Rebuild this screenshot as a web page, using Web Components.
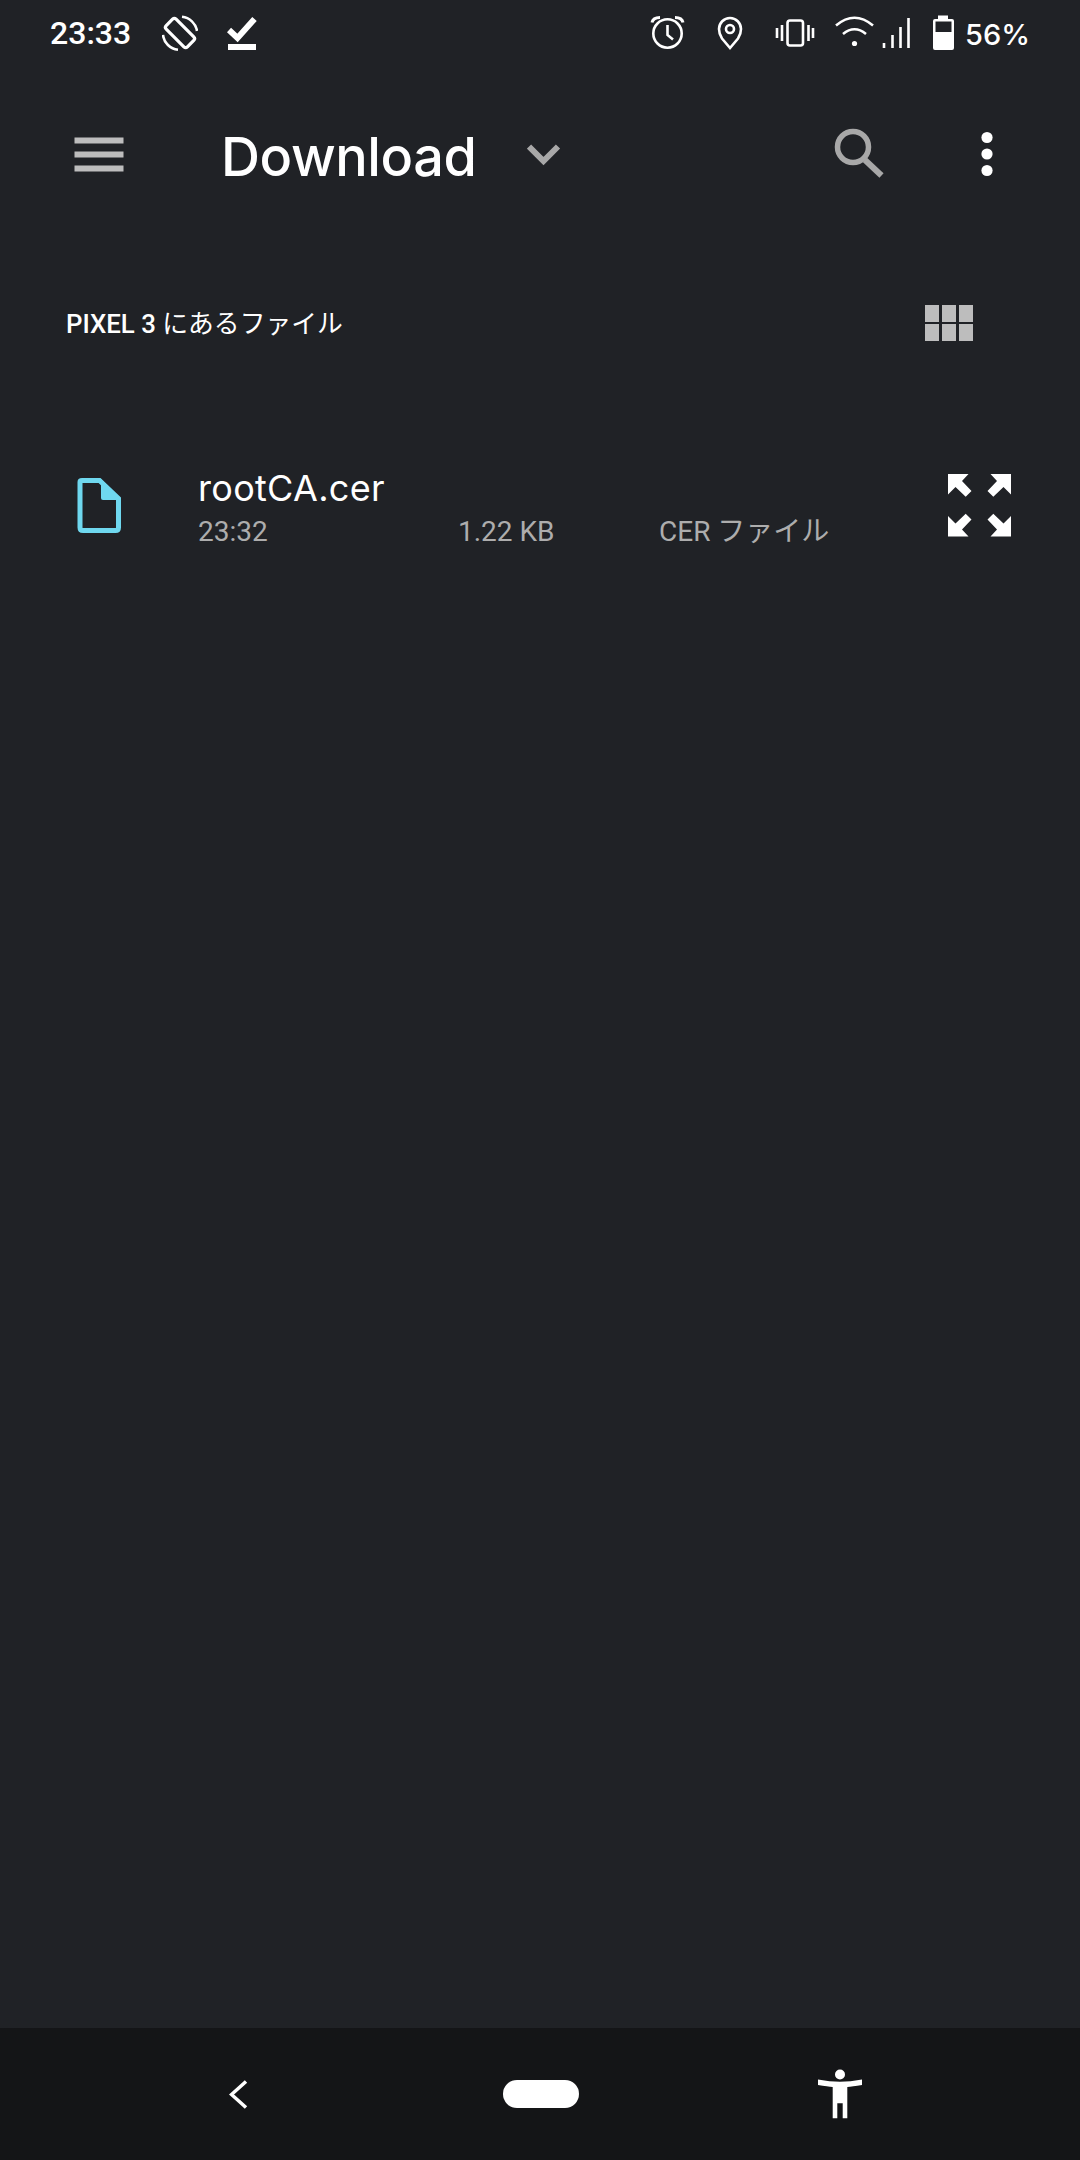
<!DOCTYPE html>
<html>
<head>
<meta charset="utf-8">
<title>Download</title>
<style>
    html, body { margin: 0; background: #202226; }
    body { width: 1080px; height: 2160px; font-family: Roboto, "Noto Sans CJK JP", sans-serif; color: #fff; }
</style>
</head>
<body>
<app-shell>
    <status-bar slot="top"></status-bar>
    <app-toolbar slot="top" title="Download"></app-toolbar>
    <section-head>PIXEL 3 <span style="font-weight:400">にあるファイル</span></section-head>
    <file-row name="rootCA.cer" time="23:32" size="1.22 KB" kind="CER ファイル"></file-row>
    <nav-bar slot="bottom"></nav-bar>
</app-shell>

<script>
class AppShell extends HTMLElement {
    connectedCallback() {
        this.attachShadow({mode: "open"}).innerHTML = `
            <style>
                :host { display: flex; flex-direction: column; height: 2160px; background: #202226; }
                main { flex: 1; }
            </style>
            <slot name="top"></slot>
            <main><slot></slot></main>
            <slot name="bottom"></slot>
        `;
    }
}

// svg viewBoxes are in page pixels, so x/y can be read straight off the screenshot
class StatusBar extends HTMLElement {
    connectedCallback() {
        this.attachShadow({mode: "open"}).innerHTML = `
            <style>
                :host { display: flex; height: 66px; padding-left: 50px; align-items: center; color: #fff; }
                svg { display: block; height: 66px; flex: none; fill: none; stroke: #fff; stroke-width: 2.6; }
                .time { font: 500 32px Roboto, sans-serif; width: 80px; }
                .pct { font: 500 29px Inter, sans-serif; margin-left: 10px; white-space: nowrap; position: relative; top: 1px; }
            </style>
            <span class="time">23:33</span>
            <svg style="margin-left:32px" width="36" viewBox="162 0 36 66">
                <rect x="173" y="18" width="14" height="30" rx="2.500" transform="rotate(-45 180 33)" stroke-width="3.200"/>
                <path d="M182 16.800A17 17 0 0 1 197 31M163 35A17 17 0 0 0 178 49.800"/>
            </svg>
            <svg style="margin-left:29px" width="30" viewBox="227 0 30 66">
                <path d="M229 30L237.500 38L254.500 19" stroke-width="6"/>
                <rect x="228" y="44" width="28" height="6" fill="#fff" stroke="none"/>
            </svg>
            <svg style="margin-left:393px" width="36" viewBox="650 0 36 66">
                <circle cx="667.500" cy="33.500" r="14.200"/>
                <path d="M667.500 25V35L673 39.500"/>
                <path d="M652 22.500Q653 17.500 660 17.500M683 22.500Q682 17.500 675 17.500" stroke-width="3"/>
            </svg>
            <svg style="margin-left:31px" width="26" viewBox="717 0 26 66">
                <path d="M730 48L722 38.500Q719 34 719 29A11 11 0 0 1 741 29Q741 34 738 38.500Z"/>
                <circle cx="730" cy="29" r="4"/>
            </svg>
            <svg style="margin-left:32px" width="40" viewBox="775 0 40 66">
                <rect x="787.500" y="20.500" width="15.500" height="25" rx="2.500"/>
                <path d="M782 25V41M777 28V38M808.500 25V41M813 28V38"/>
            </svg>
            <svg style="margin-left:19px" width="42" viewBox="834 0 42 66">
                <path d="M836 25.500Q854.500 10 873 25.500M843 34Q854.500 24.500 866 34"/>
                <circle cx="854.500" cy="43.500" r="2.600" fill="#fff" stroke="none"/>
            </svg>
            <svg style="margin-left:5px" width="30" viewBox="881 0 30 66">
                <path d="M884 43V48M892.500 35V48M900.500 27V48M908.500 18V48"/>
            </svg>
            <svg style="margin-left:21px" width="23" viewBox="932 0 23 66">
                <path d="M938 15.500H948V19H952Q954 19 954 21V48Q954 50 952 50H935Q933 50 933 48V21Q933 19 935 19H938Z" fill="#fff" stroke="none"/>
                <path d="M935.500 21.500H951.500V32H935.500Z" fill="#202226" stroke="none"/>
            </svg>
            <span class="pct">56%</span>
        `;
    }
}

class AppToolbar extends HTMLElement {
    connectedCallback() {
        this.attachShadow({mode: "open"}).innerHTML = `
            <style>
                :host { display: flex; height: 180px; align-items: center; }
                svg { display: block; height: 180px; flex: none; }
                h1 { margin: 0 0 0 97px; width: 256px; font: 500 54px Inter, sans-serif; color: #fff; white-space: nowrap; letter-spacing: -0.4px; }
            </style>
            <svg style="margin-left:74px" width="50" viewBox="74 66 50 180" fill="#bdbdbd">
                <rect x="74.500" y="137.500" width="49" height="6"/>
                <rect x="74.500" y="151.500" width="49" height="6"/>
                <rect x="74.500" y="165.500" width="49" height="6"/>
            </svg>
            <h1>${this.getAttribute("title")}</h1>
            <svg style="margin-left:50px" width="34" viewBox="527 66 34 180" fill="none" stroke="#a8a8a8" stroke-width="6">
                <path d="M529 146.500L543.500 161L558 146.500"/>
            </svg>
            <svg style="margin-left:273px" width="50" viewBox="834 66 50 180" fill="none" stroke="#a8a8a8">
                <circle cx="853" cy="147" r="15.500" stroke-width="5.500"/>
                <path d="M865 160L881.500 175.500" stroke-width="6"/>
            </svg>
            <svg style="margin-left:97px" width="12" viewBox="981 66 12 180" fill="#fff">
                <circle cx="987" cy="137.500" r="5.600"/>
                <circle cx="987" cy="154" r="5.600"/>
                <circle cx="987" cy="170.500" r="5.600"/>
            </svg>
        `;
    }
}

class SectionHead extends HTMLElement {
    connectedCallback() {
        this.attachShadow({mode: "open"}).innerHTML = `
            <style>
                :host { display: flex; height: 154px; align-items: center; padding-left: 66px; font: 500 25.800px Roboto, "Noto Sans CJK JP", sans-serif; color: #fff; }
                .label { flex: 1; white-space: nowrap; margin-top: -4px; }
                .grid { display: grid; grid-template-columns: repeat(3, 14.500px); grid-auto-rows: 17px; gap: 2px 2.500px; margin-right: 107px; }
                .grid i { background: #bdbdbd; }
            </style>
            <span class="label"><slot></slot></span>
            <div class="grid"><i></i><i></i><i></i><i></i><i></i><i></i></div>
        `;
    }
}

class FileRow extends HTMLElement {
    connectedCallback() {
        const a = n => this.getAttribute(n);
        this.attachShadow({mode: "open"}).innerHTML = `
            <style>
                :host { display: flex; align-items: flex-start; padding: 67px 68px 0 76px; }
                svg { display: block; flex: none; }
                .text { flex: 1; margin-left: 76px; }
                .name { font: 400 36px/44px Inter, sans-serif; color: #fff; letter-spacing: 0.3px; height: 44px; margin-top: -1px; }
                .meta { display: flex; font: 400 28px/36px Roboto, "Noto Sans CJK JP", sans-serif; color: #adadad; margin-top: 4px; white-space: nowrap; }
                .meta span:nth-child(1) { width: 260px; }
                .meta span:nth-child(2) { width: 201px; }
            </style>
            <svg width="46" height="84" viewBox="76 467 46 84">
                <path d="M82 480.500H99.500L118.500 498.500V527.500Q118.500 530.500 115.500 530.500H83Q80 530.500 80 527.500V482Q80 480.500 82 480.500Z" fill="none" stroke="#6fd8ef" stroke-width="5"/>
                <path d="M101 479L120 497.500V500H103Q101 500 101 498Z" fill="#6fd8ef"/>
            </svg>
            <div class="text">
                <div class="name">${a("name")}</div>
                <div class="meta"><span>${a("time")}</span><span>${a("size")}</span><span>${a("kind")}</span></div>
            </div>
            <svg width="64" height="84" viewBox="949 467 64 84" fill="#fff">
                <path id="arrow" d="M949 474H969.500L963 481L972.500 491L966.700 496.700L956.500 487L949 494.500Z"/>
                <use href="#arrow" transform="matrix(-1 0 0 1 1961 0)"/>
                <use href="#arrow" transform="matrix(1 0 0 -1 0 1010.500)"/>
                <use href="#arrow" transform="matrix(-1 0 0 -1 1961 1010.500)"/>
            </svg>
        `;
    }
}

class NavBar extends HTMLElement {
    connectedCallback() {
        this.attachShadow({mode: "open"}).innerHTML = `
            <style>
                :host { display: flex; height: 132px; align-items: center; background: #141517; padding-left: 229px; }
                svg { display: block; height: 132px; flex: none; fill: #fff; }
                .home { width: 76px; height: 28px; border-radius: 14px; background: #fff; margin-left: 255px; flex: none; }
            </style>
            <svg width="19" viewBox="229 2028 19 132">
                <path d="M246 2081.500L231.500 2094.500L246 2107.500" fill="none" stroke="#fff" stroke-width="3.500"/>
            </svg>
            <div class="home"></div>
            <svg style="margin-left:238px" width="46" viewBox="817 2028 46 132">
                <circle cx="840" cy="2074.500" r="5"/>
                <path d="M818 2079.500Q830 2081.700 840 2081.700T862 2079.500V2085Q852 2086.700 847.300 2087V2118.300H842.700V2103.300H837.300V2118.300H832.700V2087Q828 2086.700 818 2085Z"/>
            </svg>
        `;
    }
}

customElements.define("app-shell", AppShell);
customElements.define("status-bar", StatusBar);
customElements.define("app-toolbar", AppToolbar);
customElements.define("section-head", SectionHead);
customElements.define("file-row", FileRow);
customElements.define("nav-bar", NavBar);
</script>
</body>
</html>
